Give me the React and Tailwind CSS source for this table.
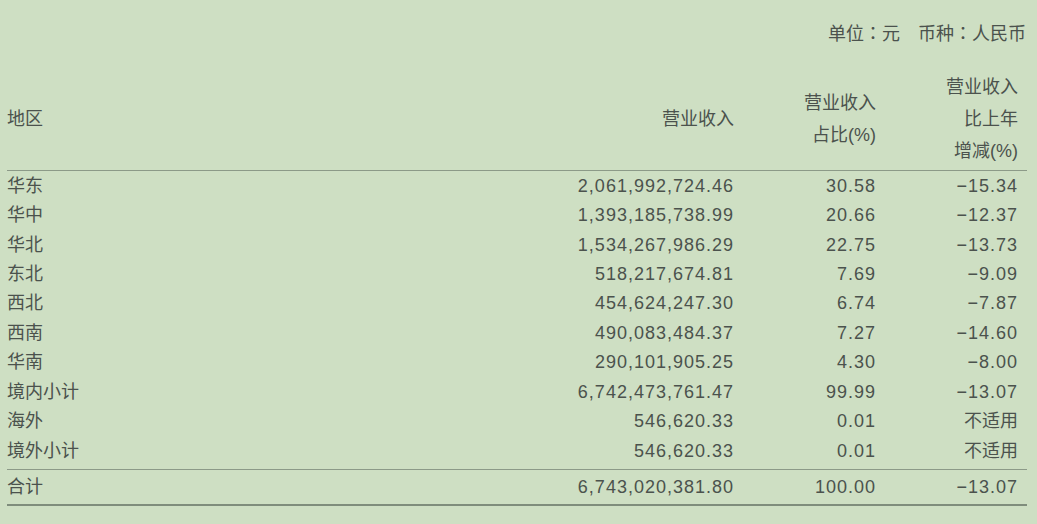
const rows = [
  ['华东', '2,061,992,724.46', '30.58', '−15.34'],
  ['华中', '1,393,185,738.99', '20.66', '−12.37'],
  ['华北', '1,534,267,986.29', '22.75', '−13.73'],
  ['东北', '518,217,674.81', '7.69', '−9.09'],
  ['西北', '454,624,247.30', '6.74', '−7.87'],
  ['西南', '490,083,484.37', '7.27', '−14.60'],
  ['华南', '290,101,905.25', '4.30', '−8.00'],
  ['境内小计', '6,742,473,761.47', '99.99', '−13.07'],
  ['海外', '546,620.33', '0.01', '不适用'],
  ['境外小计', '546,620.33', '0.01', '不适用'],
]

const grid = 'grid grid-cols-[300px_436px_142px_142px]'
const num = 'text-right pr-[9px] tracking-[1px]'

export default function App() {
  return (
    <div
      className="min-h-[524px] w-full bg-[#cedfc3] text-[#4b524d] text-[18px] pl-[7px]"
      style={{ fontFamily: '"Liberation Sans", "Noto Sans CJK SC", sans-serif' }}
    >
      <div className="w-[1020px]">
        <div
          className="pt-[20px] h-[71px] text-right pr-[1px] leading-[24px]"
          style={{ fontFamily: '"Noto Sans CJK TC", sans-serif' }}
        >
          单位：元　币种：人民币
        </div>

        {/* header */}
        <div className={`${grid} h-[100px] items-center leading-[32px] border-b border-[#8c9a88] pb-[4px]`}>
          <div>地区</div>
          <div className="text-right pr-[9px]">营业收入</div>
          <div className="text-right pr-[9px]">营业收入<br />占比(%)</div>
          <div className="text-right pr-[9px]">营业收入<br />比上年<br />增减(%)</div>
        </div>

        {/* body */}
        <div className="pb-[4px] border-b border-[#8c9a88]">
          {rows.map(r => (
            <div key={r[0]} className={`${grid} h-[29.45px] items-center leading-[24px]`}>
              <div>{r[0]}</div>
              <div className={num}>{r[1]}</div>
              <div className={num}>{r[2]}</div>
              <div className={r[3] === '不适用' ? 'text-right pr-[9px]' : num}>{r[3]}</div>
            </div>
          ))}
        </div>

        {/* total */}
        <div className={`${grid} h-[36px] items-center leading-[24px] border-b-2 border-[#7f8d7c]`}>
          <div>合计</div>
          <div className={num}>6,743,020,381.80</div>
          <div className={num}>100.00</div>
          <div className={num}>−13.07</div>
        </div>
      </div>
    </div>
  )
}
